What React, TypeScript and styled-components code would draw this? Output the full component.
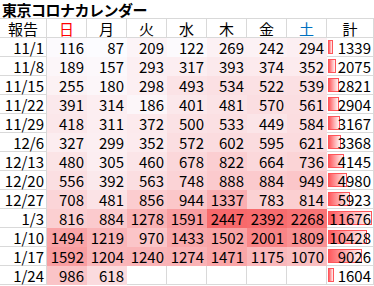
import React from 'react';
import styled, { createGlobalStyle } from 'styled-components';

const GlobalStyle = createGlobalStyle`
  html, body {
    margin: 0;
    padding: 0;
    background: #ffffff;
  }
  body {
    font-family: "Noto Sans CJK JP", "Noto Sans", sans-serif;
    color: #000000;
  }
`;

const GRID = '#d9d9d9';

const days = [
  { label: '日', color: '#ff0000' },
  { label: '月', color: '#000000' },
  { label: '火', color: '#000000' },
  { label: '水', color: '#000000' },
  { label: '木', color: '#000000' },
  { label: '金', color: '#000000' },
  { label: '土', color: '#0070c0' },
];

const weeks: { label: string; counts: number[]; total: number }[] = [
  { label: '11/1', counts: [116, 87, 209, 122, 269, 242, 294], total: 1339 },
  { label: '11/8', counts: [189, 157, 293, 317, 393, 374, 352], total: 2075 },
  { label: '11/15', counts: [255, 180, 298, 493, 534, 522, 539], total: 2821 },
  { label: '11/22', counts: [391, 314, 186, 401, 481, 570, 561], total: 2904 },
  { label: '11/29', counts: [418, 311, 372, 500, 533, 449, 584], total: 3167 },
  { label: '12/6', counts: [327, 299, 352, 572, 602, 595, 621], total: 3368 },
  { label: '12/13', counts: [480, 305, 460, 678, 822, 664, 736], total: 4145 },
  { label: '12/20', counts: [556, 392, 563, 748, 888, 884, 949], total: 4980 },
  { label: '12/27', counts: [708, 481, 856, 944, 1337, 783, 814], total: 5923 },
  { label: '1/3', counts: [816, 884, 1278, 1591, 2447, 2392, 2268], total: 11676 },
  { label: '1/10', counts: [1494, 1219, 970, 1433, 1502, 2001, 1809], total: 10428 },
  { label: '1/17', counts: [1592, 1204, 1240, 1274, 1471, 1175, 1070], total: 9026 },
  { label: '1/24', counts: [986, 618], total: 1604 },
];

const allCounts = weeks.flatMap((w) => w.counts);
const minCount = Math.min(...allCounts);
const maxCount = Math.max(...allCounts);
const maxTotal = Math.max(...weeks.map((w) => w.total));
const BAR_MAX = 44;

// white -> red two colour scale, like the spreadsheet
const heatColor = (v: number) => {
  const t = (v - minCount) / (maxCount - minCount);
  const r = Math.round(252 + (248 - 252) * t);
  const g = Math.round(252 + (105 - 252) * t);
  const b = Math.round(255 + (107 - 255) * t);
  return `rgb(${r}, ${g}, ${b})`;
};

const Sheet = styled.div`
  display: grid;
  grid-template-columns: 47px repeat(7, 40px) 47px;
  grid-auto-rows: 19px;
  width: 374px;
  font-size: 15px;
  line-height: 18px;
`;

const Cell = styled.div`
  box-sizing: border-box;
  padding-top: 1px;
  border-right: 1px solid ${GRID};
  border-bottom: 1px solid ${GRID};
  white-space: nowrap;
`;

const TitleRow = styled(Cell)`
  grid-column: 1 / -1;
  border-right: none;
  padding-left: 2px;
  font-weight: 700;
  letter-spacing: -0.5px;
`;

const HeadCell = styled(Cell)<{ $color: string }>`
  text-align: center;
  color: ${(p) => p.$color};
`;

const WeekCell = styled(Cell)`
  text-align: right;
  padding-right: 2px;
`;

const HeatCell = styled(Cell)`
  border-color: transparent;
  text-align: right;
  padding-right: 2px;
`;

const EmptyCell = styled(Cell)``;

const TotalCell = styled(Cell)`
  position: relative;
  text-align: right;
  padding-right: 2px;
`;

const Bar = styled.div`
  position: absolute;
  left: 1px;
  top: 2px;
  bottom: 2px;
  box-sizing: border-box;
  border: 1px solid #ff555a;
  background: linear-gradient(to right, #ff5a5e 0%, #ffb3b5 55%, #fff4f4 100%);
`;

const TotalValue = styled.span`
  position: relative;
`;

export default function App() {
  return (
    <>
      <GlobalStyle />
      <Sheet>
        <TitleRow>東京コロナカレンダー</TitleRow>

        <HeadCell $color="#000000">報告</HeadCell>
        {days.map((d) => (
          <HeadCell key={d.label} $color={d.color}>
            {d.label}
          </HeadCell>
        ))}
        <HeadCell $color="#000000">計</HeadCell>

        {weeks.map((w) => (
          <React.Fragment key={w.label}>
            <WeekCell>{w.label}</WeekCell>
            {days.map((d, i) =>
              i < w.counts.length ? (
                <HeatCell key={d.label} style={{ backgroundColor: heatColor(w.counts[i]) }}>
                  {w.counts[i]}
                </HeatCell>
              ) : (
                <EmptyCell key={d.label} />
              )
            )}
            <TotalCell>
              <Bar style={{ width: Math.round((BAR_MAX * w.total) / maxTotal) }} />
              <TotalValue>{w.total}</TotalValue>
            </TotalCell>
          </React.Fragment>
        ))}
      </Sheet>
    </>
  );
}
